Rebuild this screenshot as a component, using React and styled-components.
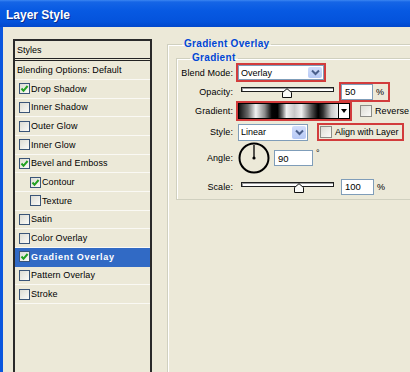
import React from 'react';
import styled, { createGlobalStyle } from 'styled-components';

const GlobalStyle = createGlobalStyle`
  html, body {
    margin: 0;
    padding: 0;
    background: #ECE9D8;
  }
  body {
    font-family: "Liberation Sans", Arial, sans-serif;
    font-size: 9px;
    color: #000;
  }
`

const Window = styled.div`
  width: 410px;
  height: 372px;
  display: flex;
  flex-direction: column;
  overflow: hidden;
  background: #ECE9D8;
`

const TitleBar = styled.div`
  flex: none;
  height: 27px;
  box-sizing: border-box;
  display: flex;
  align-items: center;
  padding: 2px 0 0 6px;
  background: linear-gradient(#3B86F1 0, #1565E6 2px, #0759E2 40%, #0453DC 80%, #0248CC 100%);
  color: #fff;
  font: bold 12px "Liberation Sans", Arial, sans-serif;
  text-shadow: 1px 1px 0 #0B2E8C;
`

const Body = styled.div`
  flex: 1;
  min-height: 0;
  display: flex;
  align-items: flex-start;
  gap: 15px;
  padding: 12px 0 0 10px;
  border-left: 3px solid #0A56DE;
  overflow: hidden;
`

const StylesPanel = styled.div`
  flex: none;
  width: 139px;
  height: 360px;
  box-sizing: border-box;
  border: 2px solid #2a2a2a;
  border-bottom: none;
`

const PanelHeader = styled.div`
  height: 20px;
  box-sizing: border-box;
  display: flex;
  align-items: center;
  padding-left: 2px;
  border-bottom: 3px double #222;
`

const PanelRow = styled.div`
  height: ${({ $h }) => $h || 18.67}px;
  box-sizing: border-box;
  display: flex;
  align-items: center;
  gap: 1px;
  padding-left: ${({ $indent, $plain }) => $plain ? 2 : $indent ? 15 : 4}px;
  border-bottom: 1px solid ${({ $selected }) => $selected ? '#316AC5' : '#FAF9F4'};
  background: ${({ $selected }) => $selected ? '#316AC5' : 'transparent'};
  color: ${({ $selected }) => $selected ? '#fff' : '#000'};
  font-weight: ${({ $selected }) => $selected ? 'bold' : 'normal'};
  letter-spacing: ${({ $selected }) => $selected ? '0.7px' : '0.1px'};
`

const Box = styled.span`
  flex: none;
  width: ${({ $size }) => $size}px;
  height: ${({ $size }) => $size}px;
  box-sizing: border-box;
  display: inline-flex;
  align-items: center;
  justify-content: center;
  border: 1px solid ${({ $dim }) => $dim ? '#8C8C86' : '#3A5578'};
  background: linear-gradient(135deg, #DCDCD4, #FBFBF8);
`

const Checkbox = ({ checked, size = 11, dim }) => (
  <Box $size={size} $dim={dim}>
    {checked && (
      <svg width="9" height="9" viewBox="0 0 9 9">
        <path d="M1.5 4.5 L3.5 6.8 L7.6 2" stroke="#21A121" strokeWidth="2" fill="none" />
      </svg>
    )}
  </Box>
)

const Group = styled.fieldset`
  flex: none;
  margin: ${({ $top }) => $top}px 0 0 0;
  padding: 0 0 ${({ $bottom }) => $bottom || 0}px ${({ $left }) => $left || 0}px;
  width: ${({ $w }) => $w}px;
  height: ${({ $h }) => $h ? `${$h}px` : 'auto'};
  box-sizing: border-box;
  min-width: 0;
  border: 1px solid #D0D0BF;
  border-right: none;
  box-shadow: inset 1px 1px 0 #FFFFFF;
`

const Legend = styled.legend`
  margin-left: ${({ $offset }) => $offset}px;
  padding: 0 2px;
  color: #0046D5;
  font: bold 10px/12px "Liberation Sans", Arial, sans-serif;
  letter-spacing: 0.3px;
`

const FormRow = styled.div`
  height: ${({ $h }) => $h}px;
  margin-top: ${({ $mt }) => $mt || 0}px;
  display: flex;
  align-items: center;
`

const Label = styled.span`
  flex: none;
  width: 56px;
  margin-right: 3px;
  text-align: right;
  letter-spacing: 0.1px;
`

const Highlight = styled.div`
  flex: none;
  display: flex;
  align-items: center;
  gap: ${({ $gap }) => $gap || 0}px;
  margin-left: ${({ $ml }) => $ml || 0}px;
  padding: ${({ $pad }) => $pad || '0'};
  border: 2px solid #D23C3C;
`

const Select = styled.div`
  flex: none;
  width: ${({ $w }) => $w}px;
  height: ${({ $h }) => $h}px;
  margin-left: ${({ $ml }) => $ml || 0}px;
  box-sizing: border-box;
  display: flex;
  align-items: center;
  justify-content: space-between;
  padding: 0 1px 0 2px;
  border: 1px solid #7F9DB9;
  background: #fff;
`

const SelectButton = styled.span`
  width: 14px;
  height: calc(100% - 2px);
  display: flex;
  align-items: center;
  justify-content: center;
  border-radius: 2px;
  background: linear-gradient(#D2DEFB, #B6C9F5);
`

const Chevron = () => (
  <svg width="9" height="7" viewBox="0 0 9 7">
    <path d="M1 1.5 L4.5 5 L8 1.5" stroke="#4A5F8C" strokeWidth="2" fill="none" />
  </svg>
)

const Slider = styled.div`
  position: relative;
  flex: none;
  width: 93px;
  height: 11px;
  margin: 2px 0 0 5px;
`

const Track = styled.div`
  height: 5px;
  box-sizing: border-box;
  border: 1px solid #1e1e1e;
  background: #fff;
  box-shadow: inset 1px 1px 0 #9a9a9a;
`

const Thumb = styled.svg`
  position: absolute;
  top: 1px;
  left: calc(${({ $value }) => $value}% - 5px);
`

const Field = styled.div`
  flex: none;
  width: ${({ $w }) => $w}px;
  height: 16px;
  margin-left: ${({ $ml }) => $ml || 0}px;
  box-sizing: border-box;
  display: flex;
  align-items: center;
  padding-left: 3px;
  border: 1px solid #7F9DB9;
  background: #fff;
  font-size: 9.5px;
`

const Unit = styled.span`
  margin-left: ${({ $ml }) => $ml || 3}px;
  align-self: ${({ $top }) => $top ? 'flex-start' : 'center'};
  margin-top: ${({ $top }) => $top ? 6 : 0}px;
`

const GradientPicker = styled.div`
  display: flex;
  width: 112px;
  height: 16px;
  box-sizing: border-box;
  border: 1px solid #000;
`

const Swatch = styled.div`
  flex: 1;
  background: linear-gradient(90deg, #111 0%, #6a6a6a 9%, #f2f2f2 17%, #8a8a8a 26%, #050505 33%, #000 39%, #777 44%, #f0f0f0 48%, #c8c8c8 56%, #efefef 63%, #555 73%, #000 80%, #333 85%, #c8c8c8 93%, #eee 100%);
`

const SwatchArrow = styled.span`
  width: 10px;
  display: flex;
  align-items: center;
  justify-content: center;
  border-left: 1px solid #000;
  background: #fff;
`

const CheckOption = styled.div`
  flex: none;
  display: flex;
  align-items: center;
  gap: 3px;
  margin-left: ${({ $ml }) => $ml || 0}px;
  letter-spacing: 0.1px;
`

const Dial = styled.svg`
  flex: none;
  margin-left: 2px;
`

const styles = [
  { name: 'Drop Shadow', checked: true },
  { name: 'Inner Shadow' },
  { name: 'Outer Glow' },
  { name: 'Inner Glow' },
  { name: 'Bevel and Emboss', checked: true },
  { name: 'Contour', checked: true, indent: true },
  { name: 'Texture', indent: true },
  { name: 'Satin' },
  { name: 'Color Overlay' },
  { name: 'Gradient Overlay', checked: true, selected: true },
  { name: 'Pattern Overlay' },
  { name: 'Stroke' },
];

const SliderControl = ({ value }) => (
  <Slider>
    <Track />
    <Thumb $value={value} width="10" height="10" viewBox="0 0 10 10">
      <path d="M0.5 9.5 V4.5 L5 0.7 L9.5 4.5 V9.5 Z" fill="#fbfbf8" stroke="#111" strokeWidth="1" />
    </Thumb>
  </Slider>
)

export default function App() {
  return (
    <Window>
      <GlobalStyle />
      <TitleBar>Layer Style</TitleBar>
      <Body>
        <StylesPanel>
          <PanelHeader>Styles</PanelHeader>
          <PanelRow $plain $h={19}>Blending Options: Default</PanelRow>
          {styles.map(s => (
            <PanelRow key={s.name} $indent={s.indent} $selected={s.selected}>
              <Checkbox checked={s.checked} />
              {s.name}
            </PanelRow>
          ))}
        </StylesPanel>

        <Group $top={-1} $left={8} $w={260} $h={360}>
          <Legend $offset={6}>Gradient Overlay</Legend>
          <Group $top={2} $w={250} $bottom={3}>
            <Legend $offset={13}>Gradient</Legend>

            <FormRow $h={19} $mt={-1}>
              <Label>Blend Mode:</Label>
              <Highlight>
                <Select $w={86} $h={15}>
                  Overlay
                  <SelectButton><Chevron /></SelectButton>
                </Select>
              </Highlight>
            </FormRow>

            <FormRow $h={19}>
              <Label>Opacity:</Label>
              <SliderControl value={49} />
              <Highlight $ml={5} $pad="0 4px 0 0">
                <Field $w={32}>50</Field>
                <Unit>%</Unit>
              </Highlight>
            </FormRow>

            <FormRow $h={20}>
              <Label>Gradient:</Label>
              <Highlight>
                <GradientPicker>
                  <Swatch />
                  <SwatchArrow>
                    <svg width="6" height="4" viewBox="0 0 6 4"><path d="M0 0 H6 L3 4 Z" fill="#000" /></svg>
                  </SwatchArrow>
                </GradientPicker>
              </Highlight>
              <CheckOption $ml={8}>
                <Checkbox size={12} dim />
                Reverse
              </CheckOption>
            </FormRow>

            <FormRow $h={20} $mt={1}>
              <Label>Style:</Label>
              <Select $w={70} $h={17} $ml={2}>
                Linear
                <SelectButton><Chevron /></SelectButton>
              </Select>
              <Highlight $ml={9} $pad="1px 3px 1px 1px" $gap={3}>
                <Checkbox size={12} dim />
                Align with Layer
              </Highlight>
            </FormRow>

            <FormRow $h={32}>
              <Label>Angle:</Label>
              <Dial width="32" height="32" viewBox="0 0 32 32">
                <circle cx="16" cy="16" r="14.5" fill="none" stroke="#000" strokeWidth="2" />
                <line x1="16" y1="16" x2="16" y2="3" stroke="#000" strokeWidth="1.3" />
                <circle cx="16" cy="16" r="1.6" fill="#000" />
              </Dial>
              <Field $w={39} $ml={4}>90</Field>
              <Unit $top>°</Unit>
            </FormRow>

            <FormRow $h={19} $mt={3}>
              <Label>Scale:</Label>
              <SliderControl value={62} />
              <Field $w={33} $ml={7}>100</Field>
              <Unit>%</Unit>
            </FormRow>
          </Group>
        </Group>
      </Body>
    </Window>
  );
}
